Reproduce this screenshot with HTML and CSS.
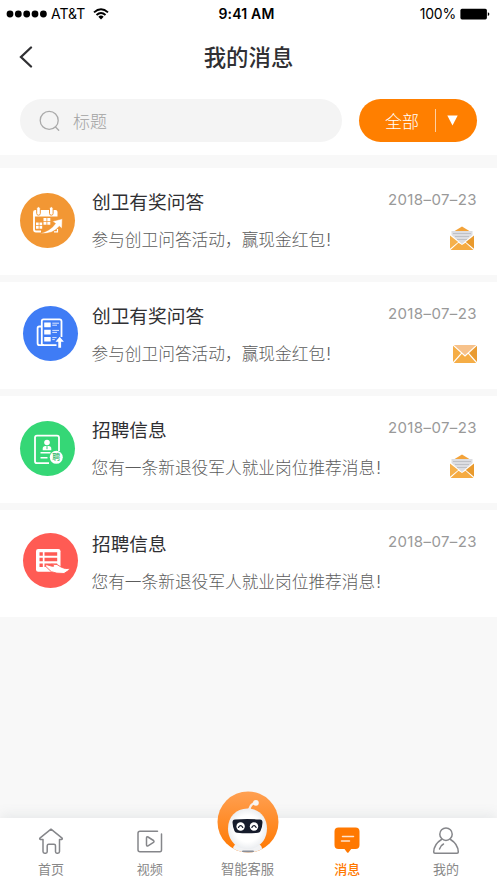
FILE: index.html
```html
<!DOCTYPE html>
<html lang="zh-CN">
<head>
<meta charset="utf-8">
<title>我的消息</title>
<link rel="stylesheet" href="styles.css">
</head>
<body>
<div class="screen">
  <header class="top">
    <div class="status">
      <div class="carrier">
        <svg class="dots" width="42" height="8" viewBox="0 0 42 8"><circle cx="4" cy="4" r="3.4"/><circle cx="12.3" cy="4" r="3.4"/><circle cx="20.7" cy="4" r="3.4"/><circle cx="29" cy="4" r="3.4"/><circle cx="37.4" cy="4" r="3.4"/></svg>
        <span>AT&amp;T</span>
        <svg class="wifi" width="16" height="12" viewBox="0 0 16 12"><g fill="none" stroke="#000" stroke-width="1.9"><path d="M1 4.4Q8-2 15 4.4"/><path d="M3.5 7Q8 2.9 12.5 7"/></g><path d="M5.3 8.7Q8 6.3 10.7 8.7L8 11.5z"/></svg>
      </div>
      <div class="clock">9:41 AM</div>
      <div class="power">
        <span>100%</span>
        <svg width="30" height="12" viewBox="0 0 30 12"><rect x=".4" y=".8" width="26.5" height="10.6" rx="1.6"/><path d="M27.8 4.2q1.6.3 1.6 1.9t-1.6 1.9z"/></svg>
      </div>
    </div>
    <div class="titlebar">
      <svg class="back" width="14" height="22" viewBox="0 0 14 22"><path d="M12 1.5 2 11 12 20.5"/></svg>
      <h1>我的消息</h1>
    </div>
    <div class="filters">
      <div class="search">
        <svg width="22" height="22" viewBox="0 0 22 22"><circle cx="10.2" cy="10.4" r="9"/><path d="m16.5 17 3.2 3.2"/></svg>
        <span>标题</span>
      </div>
      <div class="select"><span>全部</span><i class="rule"></i><svg width="11" height="11" viewBox="0 0 11 11"><path d="M.3.6h10.4L5.5 10.4z"/></svg></div>
    </div>
  </header>

  <main class="list">
    <article class="card">
      <div class="badge orange">
        <svg width="55" height="55" viewBox="0 0 55 55">
          <path d="M21 38.5h-5q-2 0-2-2V20" fill="none" stroke="#fff" stroke-width="1.8"/>
          <path d="M15.5 17h20q2 0 2 2v4.5H13.1V19q0-2 2.4-2z" fill="#fff"/>
          <g fill="#fff" stroke="#f29734" stroke-width="1"><rect x="16.7" y="13.7" width="3.6" height="8.5" rx="1.8"/><rect x="29.5" y="13.7" width="3.6" height="8.5" rx="1.8"/></g>
          <path d="M23.5 25h3v3h-3zm3.8 0h3v3h-3zm-3.8 3.8h3v3h-3zm3.8 0h3v3h-3zM16 29.5h2.7v2.7H16zm3.5 0h2.7v2.7h-2.7zM16 33h2.7v2.7H16zm3.5 0h2.7v2.7h-2.7z" fill="#fff"/>
          <path d="M20 40.5Q31 37.5 35.5 30.5L32.5 28.3 42.3 25.7 42 35.6 39.3 33.3Q33 41.5 20 40.5z" fill="#fff" stroke="#f29734" stroke-width=".5"/><path d="M34 38.9h3.5V36" fill="none" stroke="#fff" stroke-width="1.2"/>
        </svg>
      </div>
      <div class="copy"><h2>创卫有奖问答</h2><p>参与创卫问答活动，赢现金红包<b>!</b></p></div>
      <div class="meta"><time>2018–07–23</time>
        <svg class="open" width="26" height="25" viewBox="0 0 26 25"><path d="m4 6 9-5.5L22 6z" fill="#f3a33a"/><path d="M2.5 5h21v4L13 18 2.5 9z" fill="#dcdde1"/><path d="M4 7.5h18M6 10.5h14M8 13.5h10" stroke="#bfc1c6"/><path d="M1 9.5v13.2l8.2-6.8z" fill="#f5b04b"/><path d="M25 9.5v13.2l-8.2-6.8z" fill="#e99a2d"/><path d="m1.5 24 8-7.3L13 19l3.5-2.3 8 7.3z" fill="#f5ab42"/></svg>
      </div>
    </article>
    <article class="card">
      <div class="badge blue">
        <svg width="55" height="55" viewBox="0 0 55 55">
          <g fill="none" stroke="#fff" stroke-width="1.8"><path d="M33.5 39.2H20q-1.2 0-1.2-1.2V15q0-1.7 1.7-1.7h16q2 0 2 2V31"/><path d="M18 20.5h-1.7q-1.7 0-1.7 1.7v15q0 2 2 2H21"/></g>
          <path d="M21.2 16.5h6.5v4.7h-6.5zm0 7.2h6.5v4.7h-6.5zm0 7.2h6.5v4.7h-6.5zM36.7 30.7l4.2 5h-2.8v6h-2.8v-6h-2.8z" fill="#fff"/>
          <path d="M29.3 17.2H36M29.3 19.2H34M29.3 24.4H36M29.3 26.4H34M29.3 31.6h4.3M29.3 33.6h2.5" stroke="#dce7ff"/>
        </svg>
      </div>
      <div class="copy"><h2>创卫有奖问答</h2><p>参与创卫问答活动，赢现金红包<b>!</b></p></div>
      <div class="meta"><time>2018–07–23</time>
        <svg class="closed" width="24" height="18" viewBox="0 0 24 18"><rect width="24" height="18" rx="1" fill="#f5ad46"/><path d="M24 0v18l-8-9z" fill="#e99b31"/><path d="M.5 0h23L12 11z" fill="#f7c28b"/><path d="m0 0 12 11L24 0M0 18l8.7-9.8M24 18l-8.7-9.8" fill="none" stroke="#fff" stroke-width="1.2"/></svg>
      </div>
    </article>
    <article class="card">
      <div class="badge green">
        <svg width="55" height="55" viewBox="0 0 55 55">
          <path d="M29 42.2H17q-2 0-2-2V16.600q0-2 2-2h20q2 0 2 2V30" fill="none" stroke="#fff" stroke-width="1.8"/>
          <circle cx="27" cy="21.5" r="2.8" fill="#fff"/><path d="M22.7 29.3v-1.6q0-2.7 2.8-2.7h3q2.8 0 2.8 2.7v1.6z" fill="#fff"/><path d="M27 25v3.2" stroke="#35d776"/>
          <path d="M20.5 31.8h10M20.5 36.8h7" stroke="#fff" stroke-width="1.5"/>
          <circle cx="36.3" cy="36.3" r="6.5" fill="#fff"/><text x="36.3" y="39.3" class="seal">聘</text>
        </svg>
      </div>
      <div class="copy"><h2>招聘信息</h2><p>您有一条新退役军人就业岗位推荐消息<b>!</b></p></div>
      <div class="meta"><time>2018–07–23</time>
        <svg class="open" width="26" height="25" viewBox="0 0 26 25"><path d="m4 6 9-5.5L22 6z" fill="#f3a33a"/><path d="M2.5 5h21v4L13 18 2.5 9z" fill="#dcdde1"/><path d="M4 7.5h18M6 10.5h14M8 13.5h10" stroke="#bfc1c6"/><path d="M1 9.5v13.2l8.2-6.8z" fill="#f5b04b"/><path d="M25 9.5v13.2l-8.2-6.8z" fill="#e99a2d"/><path d="m1.5 24 8-7.3L13 19l3.5-2.3 8 7.3z" fill="#f5ab42"/></svg>
      </div>
    </article>
    <article class="card">
      <div class="badge red">
        <svg width="55" height="55" viewBox="0 0 55 55">
          <rect x="13" y="16" width="24.5" height="22.7" rx="2.2" fill="#fff"/>
          <path d="M16.5 19.2h3.3v3.5h-3.3zm5 0h12.7v3.5H21.5zm-5 5.6h3.3v3.5h-3.3zm5 0h12.7v3.5H21.5zm-5 5.7h3.3V34h-3.3zm5 0h12.7V34H21.5z" fill="#ff5b54"/>
          <path d="M22.3 33q-.3-1.8 2-1.1l5 1.4q2 .3 1.3-.8l-2-1.2 5.4.2 4.5 2.8q4 2 7.700 1v1.8l-5.2 3.4q-8 .2-12.7-1.8z" fill="#fff" stroke="#ff5b54" stroke-width=".9"/>
        </svg>
      </div>
      <div class="copy"><h2>招聘信息</h2><p>您有一条新退役军人就业岗位推荐消息<b>!</b></p></div>
      <div class="meta"><time>2018–07–23</time></div>
    </article>
  </main>

  <nav class="tabs">
    <div class="tab"><svg width="28" height="30" viewBox="0 0 28 30"><path d="M6 13.5H3.5q-1.5-.4-.3-1.6L14 3.2l10.8 8.7q1.2 1.2-.3 1.6H22.5v12q0 1.7-1.7 1.7h-.9q-1.4 0-1.4-1.4v-6q0-1.5-1.5-1.5h-5.3q-1.5 0-1.5 1.5v6q0 1.4-1.4 1.4H7.7Q6 27.2 6 25.5z"/></svg><span>首页</span></div>
    <div class="tab"><svg width="28" height="30" viewBox="0 0 28 30"><path d="M21.500 5.300H4q-2 0-2 2v16.400q0 2 2 2h20q1.500 0 1.500-2V8"/><path d="M10.500 12q0-1.800 1.500-1l5.500 3.500q1 1 0 1.800L12 19.800q-1.500.8-1.500-1z"/></svg><span>视频</span></div>
    <div class="tab bot">
      <svg width="62" height="62" viewBox="0 0 62 62">
        <defs><linearGradient id="sun" x2="0" y2="1"><stop stop-color="#ffa052"/><stop offset="1" stop-color="#ff7800"/></linearGradient><radialGradient id="shell"><stop offset=".65" stop-color="#fff"/><stop offset="1" stop-color="#eceef1"/></radialGradient><clipPath id="disc"><circle cx="31" cy="31" r="30.5"/></clipPath></defs>
        <circle cx="31" cy="31" r="30.5" fill="url(#sun)"/>
        <g clip-path="url(#disc)"><path d="M16 62v-4q0-4 4-5h21q4 1 4 5v4z" fill="#f1f2f4"/><path d="M30.5 19.5q2-.5 2.700-3.500 1-3 5-4.200" fill="none" stroke="#f8eee7" stroke-width="2.2"/><circle cx="38.9" cy="11.8" r="2.9" fill="#f9f5f2"/><path d="M30.5 17.500c11.5 0 19.5 8.5 19.5 20S42 58 30.500 58 11 49 11 37.500s8-20 19.500-20z" fill="url(#shell)"/><path d="M26 60.500h10" stroke="#8a8e98" stroke-width="2"/></g>
        <path d="M18 28.600q12-1 25 0 2.500.2 2.500 3-.2 5-2 8.500-.7 1.600-2.500 1.700-10.500 1-21 0-1.800-.1-2.500-1.700-1.700-3.500-2-8.500 0-2.800 2.500-3z" fill="#151b2b"/>
        <circle cx="23.6" cy="35.5" r="4.2" fill="#fff"/><circle cx="37" cy="35.5" r="4.2" fill="#fff"/><path d="M21.500 36.400q2.100-3.400 4.200 0m9.200 0q2.100-3.400 4.200 0" fill="none" stroke="#151b2b" stroke-width="1.2"/>
      </svg><span>智能客服</span></div>
    <div class="tab active"><svg width="28" height="30" viewBox="0 0 28 30"><path class="bubble" d="M5.500 1.500h17q4 0 4 4V19q0 4-4 4h-4.300L15.500 26.500q-.7.700-1.400 0L11.500 23h-6q-4 0-4-4V5.500q0-4 4-4z"/><path class="lines" d="M9.500 10.500h11M8.500 15h8"/></svg><span>消息</span></div>
    <div class="tab"><svg width="28" height="30" viewBox="0 0 28 30"><circle cx="14" cy="8.2" r="6.2"/><path d="M9.500 13.500Q2 18 1.700 26q0 1.200 1.300 1.200h22q1.300 0 1.300-1.200Q26 18 18.500 13.500M11.500 18q-3 1.500-4 5"/></svg><span>我的</span></div>
  </nav>
</div>
</body>
</html>
```
FILE: styles.css
```css
* { box-sizing: border-box; }
body { margin: 0; background: #f8f8f8; font-family: "Noto Sans CJK SC", sans-serif; color: #303033; }
h1, h2, p { margin: 0; }
svg { display: block; flex: none; }
.screen { width: 497px; height: 883px; display: flex; flex-direction: column; overflow: hidden; }

.top { height: 155px; flex: none; background: #fff; }
.status { height: 28px; padding: 0 7px; display: grid; grid-template-columns: 1fr auto 1fr; align-items: center; font: 14px/28px Inter, sans-serif; color: #000; }
.carrier, .power { display: flex; align-items: center; }
.carrier { gap: 3px; letter-spacing: 0; }
.carrier .dots { margin-left: -1px; }
.carrier .wifi { margin-left: 5px; }
.clock { font-weight: 600; letter-spacing: .2px; margin-left: -4px; }
.power { justify-content: flex-end; gap: 4px; letter-spacing: -.2px; }

.titlebar { height: 57px; display: grid; grid-template-columns: 60px 1fr 60px; align-items: center; }
.back { margin-left: 19px; fill: none; stroke: #303033; stroke-width: 2.3; stroke-linecap: round; }
h1 { font-size: 22.4px; line-height: 32px; font-weight: 500; text-align: center; margin-top: -2px; }

.filters { display: flex; gap: 17px; margin: 14px 20px 0; height: 43px; }
.search { width: 322px; border-radius: 22px; background: #f4f4f4; display: flex; align-items: center; gap: 12px; padding-left: 19px; font-size: 17px; color: #a2a2a2; font-weight: 300; }
.search svg { fill: none; stroke: #aaa; stroke-width: 1.3; stroke-linecap: round; }
.select { width: 118px; border-radius: 22px; background: #ff7f00; color: #fff; display: flex; align-items: center; padding-left: 26px; font-size: 17px; font-weight: 300; }
.rule { width: 1px; height: 23px; background: #ffd0a0; margin: 0 11px 0 16px; }
.select svg { fill: #fff; }

.list { flex: 1; padding-top: 13px; display: flex; flex-direction: column; gap: 7px; }
.card { height: 107px; flex: none; background: #fff; display: flex; padding: 0 20px; }
.badge { width: 55px; height: 55px; border-radius: 50%; flex: none; margin-top: 25px; margin-right: 17px; }
.orange { background: #f29734; }
.blue { background: #3f7cf5; margin: 24px 14px 0 3px; }
.green { background: #35d776; }
.red { background: #ff5b54; margin: 23px 14px 0 3px; }
.seal { font-size: 8px; font-weight: 500; text-anchor: middle; fill: #35b86a; }
.copy { flex: 1; white-space: nowrap; }
h2 { font-size: 18.7px; line-height: 28px; font-weight: 400; margin-top: 19px; }
.copy p { font-size: 16.7px; line-height: 25px; font-weight: 300; color: #5c5c5c; margin: 12px 0 0 -.5px; }
.copy b { font: 300 17px Inter, sans-serif; margin-left: 1px; }
.meta { width: 90px; display: flex; flex-direction: column; align-items: flex-end; }
time { font: 15px/20px Inter, sans-serif; letter-spacing: .4px; color: #999; margin-top: 22px; white-space: nowrap; }
.open { margin: 16px 2px 0 0; }
.closed { margin-top: 21px; }

.tabs { height: 65px; flex: none; background: #fff; display: flex; justify-content: space-between; padding: 0 2px 0 2px; box-shadow: 0 -3px 12px rgba(110, 120, 135, .12); }
.tab { width: 98px; display: flex; flex-direction: column; align-items: center; justify-content: flex-end; padding-bottom: 4px; font-size: 13px; line-height: 20px; color: #888; }
.tab svg { fill: none; stroke: #85868a; stroke-width: 1.5; stroke-linecap: round; stroke-linejoin: round; margin-bottom: 3px; }
.bot { font-size: 13.3px; padding-right: 2px; }
.bot svg { stroke: none; margin-bottom: 6px; }
.active { color: #ff7800; font-weight: 500; }
.tab .bubble { fill: #ff7800; stroke: none; }
.tab .lines { stroke: #ffe4ce; }
```
